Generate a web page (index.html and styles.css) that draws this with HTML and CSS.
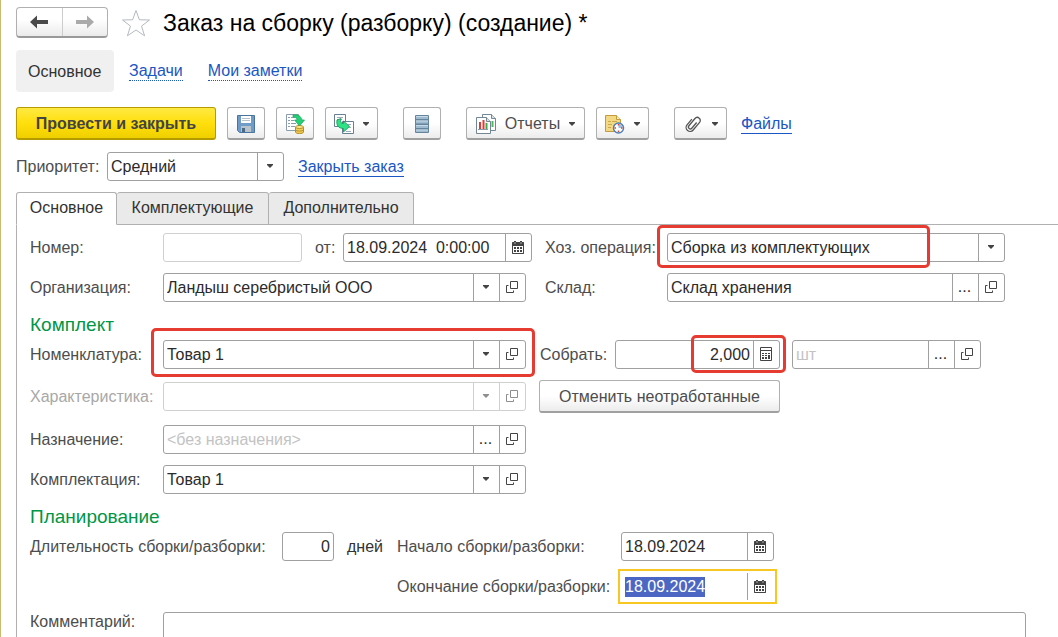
FILE: index.html
```html
<!DOCTYPE html>
<html lang="ru">
<head>
<meta charset="utf-8">
<title>Заказ на сборку (разборку) (создание) *</title>
<link rel="stylesheet" href="styles.css">
<script src="form.js" defer></script>
</head>
<body>
<svg class="sprite" aria-hidden="true">
  <symbol id="open" viewBox="0 0 14 14"><path d="M5.500 1.500h7v7h-7zM3.500 5.500h-2v7h7v-2" fill="none" stroke="#444"/></symbol>
  <symbol id="arrow" viewBox="0 0 6 4"><path d="M0 0h6v1L3 4 0 1z" fill="#444"/></symbol>
  <symbol id="calendar" viewBox="0 0 12 13"><path d="M2 0h2v1h4V0h2v1h1.500l.5.500V12.500l-.5.500H.5L0 12.500V1.500L.5 1H2z" fill="#444"/><path d="M1 5h10v7H1z" fill="#fff"/><path d="M2 6h2v2H2zM5 6h2v2H5zM8 6h2v2H8zM2 9h2v2H2zM5 9h2v2H5zM8 9h2v2H8z" fill="#444"/><path d="M3 1v2M9 1v2" stroke="#aaa"/></symbol>
  <symbol id="calc" viewBox="0 0 12 14"><path d="M.5.500h11v13H.5zM0 3.500h12" fill="none" stroke="#444"/><path d="M2 6h2v1H2zM5 6h2v1H5zM8 6h2v1H8zM2 8h2v1H2zM5 8h2v1H5zM8 8h2v4H8zM2 10h2v2H2zM5 10h2v2H5z" fill="#444"/></symbol>
</svg>
<main class="page">
  <header class="title-bar">
    <div class="history">
      <button type="button" aria-label="Назад"><svg width="18" height="14" viewBox="0 0 18 14"><path d="M0 7l7-6.500V5h11v4H7v4.500z" fill="#4a4a4a"/></svg></button>
      <button type="button" aria-label="Вперед"><svg width="18" height="14" viewBox="0 0 18 14"><path d="M18 7l-7-6.500V5H0v4h11v4.500z" fill="#aaa"/></svg></button>
    </div>
    <button type="button" class="star" aria-label="Избранное"><svg width="30" height="28" viewBox="0 0 30 28"><path d="M15 1.500l3.400 9.300 10.100.200-8 6.100 3.100 9.700-8.600-5.800-8.600 5.800 3.100-9.700-8-6.100 10.100-.2z" fill="#fff" stroke="#b4bac0"/></svg></button>
    <h1>Заказ на сборку (разборку) (создание) *</h1>
  </header>

  <nav class="sections">
    <span class="section-current">Основное</span>
    <a class="dotted" href="#tasks">Задачи</a>
    <a class="dotted" href="#notes">Мои заметки</a>
  </nav>

  <div class="toolbar">
    <div class="group">
      <button type="button" class="btn primary">Провести и закрыть</button>
      <button type="button" class="btn icon" aria-label="Записать"><svg width="18" height="18" viewBox="0 0 18 18"><path d="M.5.500h17v17h-15l-2-2z" fill="#6f9bc9" stroke="#48749f"/><path d="M4 1h10v7H4z" fill="#fff"/><path d="M5 3.500h8M5 5.500h8" stroke="#b5c0ca"/><path d="M4 11h10v6H4z" fill="#b9c3cb"/><path d="M5 13h3v4H5z" fill="#4e6a83"/></svg></button>
      <button type="button" class="btn icon" aria-label="Провести"><svg width="20" height="20" viewBox="0 0 20 20"><path d="M1.500.500h12v16h-12z" fill="#fff" stroke="#8b9dab"/><path d="M3 3.500h2M6 3.500h4M3 6.500h2M6 6.500h3M3 9.500h2M6 9.500h5M3 12.500h2M6 12.500h4" stroke="#8b9dab"/><path d="M10.500 13v5c0 2 8 2 8 0v-5" fill="#f3cf55" stroke="#b48d28"/><ellipse cx="14.500" cy="13" rx="4" ry="1.500" fill="#ffe88b" stroke="#b48d28"/><path d="M10.500 16c1 1.500 7 1.500 8 0" fill="none" stroke="#b48d28"/><path d="M8 1c5-.8 8 1 9 5h2.500l-5 6-5-6H12c0-2-1.500-3-4-3z" fill="#25cf76" stroke="#1ba560" stroke-width=".7"/></svg></button>
      <button type="button" class="btn menu" aria-label="Создать на основании"><svg width="20" height="20" viewBox="0 0 20 20"><path d="M.5.500h11v12H.5z" fill="#fff" stroke="#667f91"/><path d="M3 3.500h6M3 5.500h5" stroke="#9baab5"/><path d="M8.500 7.500h11v12h-11z" fill="#fff" stroke="#667f91"/><path d="M14 10.500h3M15 13.500h2M12 17.500h5" stroke="#9baab5"/><path d="M3 6l4-1.500C6 8 7 9.500 9.500 9.500V7l6 5.500-6 5.500v-3.500C4.500 14.500 2 11 3 6z" fill="#2ee386" stroke="#158d50" stroke-width=".8"/></svg><svg class="arrow"><use href="#arrow"/></svg></button>
    </div>
    <div class="group">
      <button type="button" class="btn icon" aria-label="Список"><svg width="14" height="18" viewBox="0 0 14 18"><rect width="14" height="18" rx="1" fill="#64859d"/><path d="M1 1h12v3H1zM1 5.500h12v3H1zM1 10h12v3H1zM1 14.500h12V17H1z" fill="#9ebbd0"/><path d="M1 1h12v1H1zM1 5.500h12v1H1zM1 10h12v1H1zM1 14.500h12v1H1z" fill="#c8dae7"/></svg></button>
    </div>
    <div class="group">
      <button type="button" class="btn menu reports"><svg width="20" height="20" viewBox="0 0 20 20"><path d="M6.500.500h9l4 4v12h-13z" fill="#fff" stroke="#718796"/><path d="M15.500.500v4h4" fill="#d7e0e6" stroke="#718796"/><path d="M16.500 7v6" stroke="#51b65d" stroke-width="2"/><path d="M.5 3.500h10l4 4v12H.5z" fill="#fff" stroke="#718796"/><path d="M10.500 3.500v4h4" fill="#d7e0e6" stroke="#718796"/><path d="M4 8v7M7.500 6v9" stroke="#df3a38" stroke-width="2"/><path d="M10.500 9v6" stroke="#35ad50" stroke-width="2"/><path d="M2 15.500h10" stroke="#8a9ba7"/></svg><span>Отчеты</span><svg class="arrow"><use href="#arrow"/></svg></button>
      <button type="button" class="btn menu" aria-label="История"><svg width="20" height="20" viewBox="0 0 20 20"><path d="M.5 1.500h11l4 4v12H.5z" fill="#f4d984" stroke="#c39b3d"/><path d="M11.500 1.500v4h4" fill="#fff0b8" stroke="#c39b3d"/><path d="M3 7.500h3M7 7.500h5M3 10.500h4M3 13.500h3" stroke="#cda94d"/><circle cx="13.500" cy="14" r="5" fill="#fff" stroke="#4d80b3" stroke-width="1.500"/><path d="M13.500 10a4 4 0 0 1 4 4h-4z" fill="#9fbddb"/><path d="M13.500 10v1.500M13.500 16.500V18M9.500 14H11M16 14h1.500" stroke="#dd4040" stroke-width="1.500"/></svg><svg class="arrow"><use href="#arrow"/></svg></button>
    </div>
    <div class="group">
      <button type="button" class="btn menu" aria-label="Присоединить"><svg width="20" height="20" viewBox="0 0 20 20"><g transform="rotate(40 10 10)"><path d="M6 7v7.500a4 4 0 0 0 8 0V4.500a3 3 0 0 0-6 0v9.500a1.900 1.900 0 0 0 3.800 0V6.500" fill="none" stroke="#555" stroke-width="1.300"/></g></svg><svg class="arrow"><use href="#arrow"/></svg></button>
      <a class="solid files" href="#files">Файлы</a>
    </div>
  </div>

  <div class="priority">
    <label for="priority">Приоритет:</label>
    <div class="field w-priority">
      <select id="priority"><option>Средний</option></select>
      <span class="cell"><svg class="arrow"><use href="#arrow"/></svg></span>
    </div>
    <a class="solid close-order" href="#close">Закрыть заказ</a>
  </div>

  <div class="tabs" role="tablist">
    <button type="button" role="tab" aria-selected="true">Основное</button>
    <button type="button" role="tab" aria-selected="false">Комплектующие</button>
    <button type="button" role="tab" aria-selected="false">Дополнительно</button>
  </div>

  <form class="panel">
    <div class="row">
      <label class="name" for="number">Номер:</label>
      <div class="field off w-number"><input id="number" disabled></div>
      <label class="from" for="date">от:</label>
      <div class="field w-date"><input id="date" value="18.09.2024&nbsp; 0:00:00"><button type="button" class="cell" aria-label="Календарь"><svg width="12" height="13"><use href="#calendar"/></svg></button></div>
      <label class="side after-date" for="operation">Хоз. операция:</label>
      <div class="field w-side">
        <select id="operation"><option>Сборка из комплектующих</option></select>
        <span class="cell"><svg class="arrow"><use href="#arrow"/></svg></span>
        <span class="mark mark-operation"></span>
      </div>
    </div>
    <div class="row">
      <label class="name" for="company">Организация:</label>
      <div class="field w-main"><input id="company" value="Ландыш серебристый ООО"><button type="button" class="cell" aria-label="Выбрать"><svg class="arrow"><use href="#arrow"/></svg></button><button type="button" class="cell" aria-label="Открыть"><svg width="14" height="14"><use href="#open"/></svg></button></div>
      <label class="side after-main" for="store">Склад:</label>
      <div class="field w-side"><input id="store" value="Склад хранения"><button type="button" class="cell">...</button><button type="button" class="cell" aria-label="Открыть"><svg width="14" height="14"><use href="#open"/></svg></button></div>
    </div>

    <h2>Комплект</h2>
    <div class="row">
      <label class="name" for="item">Номенклатура:</label>
      <div class="field w-main"><input id="item" value="Товар 1"><button type="button" class="cell" aria-label="Выбрать"><svg class="arrow"><use href="#arrow"/></svg></button><button type="button" class="cell" aria-label="Открыть"><svg width="14" height="14"><use href="#open"/></svg></button><span class="mark mark-item"></span></div>
      <label class="collect" for="quantity">Собрать:</label>
      <div class="field w-quantity"><input id="quantity" class="num" value="2,000"><button type="button" class="cell" aria-label="Калькулятор"><svg width="12" height="14"><use href="#calc"/></svg></button><span class="mark mark-quantity"></span></div>
      <div class="field w-unit"><input aria-label="Единица измерения" placeholder="шт"><button type="button" class="cell">...</button><button type="button" class="cell" aria-label="Открыть"><svg width="14" height="14"><use href="#open"/></svg></button></div>
    </div>
    <div class="row variant-row">
      <label class="name muted" for="variant">Характеристика:</label>
      <div class="field off w-main"><input id="variant" disabled><button type="button" class="cell" disabled aria-label="Выбрать"><svg class="arrow"><use href="#arrow"/></svg></button><button type="button" class="cell" disabled aria-label="Открыть"><svg width="14" height="14"><use href="#open"/></svg></button></div>
      <button type="button" class="btn cancel">Отменить неотработанные</button>
    </div>
    <div class="row">
      <label class="name" for="purpose">Назначение:</label>
      <div class="field w-main"><input id="purpose" placeholder="&lt;без назначения&gt;"><button type="button" class="cell">...</button><button type="button" class="cell" aria-label="Открыть"><svg width="14" height="14"><use href="#open"/></svg></button></div>
    </div>
    <div class="row">
      <label class="name" for="kit">Комплектация:</label>
      <div class="field w-main"><input id="kit" value="Товар 1"><button type="button" class="cell" aria-label="Выбрать"><svg class="arrow"><use href="#arrow"/></svg></button><button type="button" class="cell" aria-label="Открыть"><svg width="14" height="14"><use href="#open"/></svg></button></div>
    </div>

    <h2>Планирование</h2>
    <div class="plan">
      <div class="duration">
        <label for="days">Длительность сборки/разборки:</label>
        <div class="field w-days"><input id="days" class="num" value="0"></div>
        <span class="days">дней</span>
      </div>
      <div class="dates">
        <label for="start">Начало сборки/разборки:</label>
        <div class="field"><input id="start" value="18.09.2024"><button type="button" class="cell" aria-label="Календарь"><svg width="12" height="13"><use href="#calendar"/></svg></button></div>
        <label for="end">Окончание сборки/разборки:</label>
        <div class="field active"><input id="end" value="18.09.2024"><button type="button" class="cell" aria-label="Календарь"><svg width="12" height="13"><use href="#calendar"/></svg></button></div>
      </div>
    </div>
    <div class="row comment-row">
      <label class="name" for="comment">Комментарий:</label>
      <textarea id="comment"></textarea>
    </div>
  </form>
</main>
</body>
</html>
```
FILE: styles.css
```css
* { box-sizing: border-box; }
body { margin: 0; background: #fff; color: #4d4d4d; font: 16px/20px "Liberation Sans", Arial, sans-serif; }
button, input, select, textarea { margin: 0; font: inherit; color: inherit; }
button { padding: 0; border: 0; background: none; }
svg { display: block; flex: none; }
h1, h2 { margin: 0; font-weight: normal; }
.sprite { position: absolute; width: 0; height: 0; }
.page { display: flex; flex-direction: column; height: 100vh; overflow: hidden; padding: 7px 0 0 15px; border-left: 1px solid #cdb873; }

.title-bar { display: flex; align-items: center; height: 31px; }
.history { display: flex; width: 92px; height: 31px; border: 1px solid #b0b0b0; border-bottom: 2px solid #999; border-radius: 4px; background: linear-gradient(#fff 40%, #ebebeb); }
.history button { flex: 1; display: flex; align-items: center; justify-content: center; }
.history button + button { border-left: 1px solid #ccc; }
.star { margin: 0 12px 0 13px; }
h1 { color: #000; font-size: 23px; line-height: 30px; }

.sections { display: flex; align-items: center; gap: 25px; margin-top: 12px; height: 42px; }
.section-current { padding: 12px 12px 10px; margin-right: -10px; min-width: 98px; border-radius: 4px; background: #f0f0f0; color: #333; }
a { color: #1a56c4; text-decoration: none; line-height: 18px; padding-top: 1px; }
.dotted { border-bottom: 1px dotted #1a56c4; }
.solid { border-bottom: 1px solid #1a56c4; }

.toolbar { display: flex; gap: 25px; margin-top: 15px; }
.group { display: flex; align-items: center; gap: 11px; }
.btn { display: flex; align-items: center; justify-content: center; height: 33px; padding-top: 1px; border: 1px solid #b0b0b0; border-bottom: 2px solid #a0a0a0; border-radius: 3px; background: linear-gradient(#fff 50%, #ececec); }
.primary { width: 200px; border-color: #b59b00; background: linear-gradient(#ffe943, #ffdf0c 50%, #f0cf00); color: #444; font-weight: bold; }
.icon { width: 38px; }
.menu { gap: 9px; padding: 1px 8px 0; }
.reports { width: 119px; }
.arrow { width: 6px; height: 4px; }
.files { margin-left: 3px; }

.priority { display: flex; align-items: center; margin-top: 12px; }
.priority label { width: 91px; }
.close-order { margin-left: 14px; }

.field { position: relative; display: flex; min-width: 0; height: 29px; border: 1px solid #a0a0a0; border-radius: 3px; background: #fff; color: #2b2b2b; }
.field input, .field select { flex: 1; width: 100%; min-width: 0; padding: 0 3px; border: 0; outline: 0; background: none; appearance: none; }
.field .num { text-align: right; }
.cell { display: flex; align-items: center; justify-content: center; flex: none; width: 26px; padding: 0 2px 1px 0; border-left: 1px solid #a0a0a0; }
select + .cell { position: absolute; top: 0; right: 0; bottom: 0; pointer-events: none; }
.field ::placeholder { color: #c3c3c3; opacity: 1; }
.field ::selection { background: #4c67c3; color: #fff; }
.off, .off .cell { border-color: #d0d0d0; }
.off svg { opacity: .6; }
.muted { color: #a8a8a8; }
.w-priority { width: 177px; }
.w-number { flex: 0 1 139px; }
.w-date { flex: 0 1 189px; }
.w-main { flex: 0 1 363px; }
.w-side { flex: 0 1 338px; }
.w-quantity { flex: 0 1 165px; }
.w-unit { flex: 0 1 189px; margin-left: 12px; }
.w-days { width: 52px; }

.tabs { display: flex; margin-top: 11px; height: 33px; box-shadow: inset 0 -1px #b0b0b0; flex: none; }
.tabs button { min-width: 101px; padding: 0 12px 2px; border: 1px solid #b0b0b0; border-left: 0; border-radius: 3px 3px 0 0; background: #eaeaea; color: #333; }
.tabs button:first-child { border-left: 1px solid #b0b0b0; border-bottom-color: #fff; background: #fff; }
.tabs button:nth-child(2) { min-width: 152px; }
.tabs button:nth-child(3) { min-width: 145px; }

.panel { flex: 1; padding: 8px 32px 0 13px; border-left: 1px solid #b0b0b0; }
.row { display: flex; align-items: center; margin-bottom: 11px; }
.row label { white-space: nowrap; flex: none; }
.name { width: 133px; }
.from { width: 41px; padding-left: 13px; }
.side { width: 122px; }
.after-date { margin-left: 13px; }
.after-main { width: 141px; padding-left: 19px; }
.collect { width: 89px; padding-left: 14px; }
h2 { color: #009646; font-size: 19px; line-height: 24px; padding-bottom: 3px; }
.variant-row { margin-bottom: 12px; }
.cancel { width: 241px; margin-left: 13px; }

.mark { position: absolute; border: 3px solid #e63b30; border-radius: 5px; pointer-events: none; }
.mark-operation { left: -11px; top: -9px; width: 273px; height: 43px; }
.mark-item { left: -13px; right: -10px; top: -13px; bottom: -9px; }
.mark-quantity { right: -7px; width: 95px; top: -6px; bottom: -5px; }

.plan { display: flex; gap: 14px; }
.duration { display: flex; align-items: center; height: 29px; }
.duration label { width: 252px; }
.days { margin-left: 13px; color: #333; }
.dates { display: grid; grid-template-columns: 224px minmax(0, 153px); gap: 11px 0; align-items: center; }
.dates label { white-space: nowrap; }
.active { border-color: transparent; outline: 2px solid #f8c822; outline-offset: 1px; border-radius: 0; }
.comment-row { align-items: flex-start; margin-top: 11px; }
.comment-row textarea { flex: 1; height: 60px; border: 1px solid #a0a0a0; border-radius: 3px; resize: none; }
```
FILE: form.js
```js
const end = document.getElementById("end");
end.focus();
end.select();
```
